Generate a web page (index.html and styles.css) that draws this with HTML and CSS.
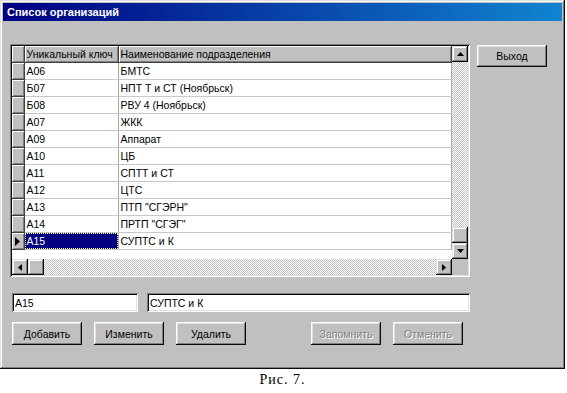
FILE: index.html
```html
<!DOCTYPE html>
<html lang="ru">
<head>
    <meta charset="UTF-8">
    <title>Список организаций</title>
    <link rel="stylesheet" href="styles.css">
</head>
<body>
    <div class="window">
        <div class="titlebar">Список организаций</div>

        <div class="client">
            <!-- Grid and exit button -->
            <div class="top">
                <div class="grid">
                    <div class="grid-main">
                        <div class="grid-view">
                            <table class="table">
                                <colgroup>
                                    <col class="col-ind">
                                    <col class="col-key">
                                    <col>
                                </colgroup>
                                <tr class="head">
                                    <th class="ind"></th>
                                    <th>Уникальный ключ</th>
                                    <th>Наименование подразделения</th>
                                </tr>
                                <tr><td class="ind"></td><td>A06</td><td>БМТС</td></tr>
                                <tr><td class="ind"></td><td>Б07</td><td>НПТ Т и СТ (Ноябрьск)</td></tr>
                                <tr><td class="ind"></td><td>Б08</td><td>РВУ 4 (Ноябрьск)</td></tr>
                                <tr><td class="ind"></td><td>A07</td><td>ЖКК</td></tr>
                                <tr><td class="ind"></td><td>A09</td><td>Аппарат</td></tr>
                                <tr><td class="ind"></td><td>A10</td><td>ЦБ</td></tr>
                                <tr><td class="ind"></td><td>A11</td><td>СПТТ и СТ</td></tr>
                                <tr><td class="ind"></td><td>A12</td><td>ЦТС</td></tr>
                                <tr><td class="ind"></td><td>A13</td><td>ПТП "СГЭРН"</td></tr>
                                <tr><td class="ind"></td><td>A14</td><td>ПРТП "СГЭГ"</td></tr>
                                <tr class="current">
                                    <td class="ind">
                                        <svg width="5" height="9" viewBox="0 0 5 9"><path d="M0 0 L5 4.5 L0 9 Z" fill="#000"/></svg>
                                    </td>
                                    <td class="selected"><span class="focus">A15</span></td>
                                    <td>СУПТС и К</td>
                                </tr>
                            </table>
                        </div>
                        <div class="vscroll">
                            <div class="sbtn">
                                <svg width="7" height="4" viewBox="0 0 7 4"><path d="M3.5 0 L7 4 L0 4 Z" fill="#000"/></svg>
                            </div>
                            <div class="track track-v">
                                <div class="thumb"></div>
                            </div>
                            <div class="sbtn">
                                <svg width="7" height="4" viewBox="0 0 7 4"><path d="M0 0 L7 0 L3.5 4 Z" fill="#000"/></svg>
                            </div>
                        </div>
                    </div>
                    <div class="hscroll-row">
                        <div class="hscroll">
                            <div class="sbtn">
                                <svg width="4" height="7" viewBox="0 0 4 7"><path d="M4 0 L4 7 L0 3.5 Z" fill="#000"/></svg>
                            </div>
                            <div class="thumb"></div>
                            <div class="track"></div>
                            <div class="sbtn">
                                <svg width="4" height="7" viewBox="0 0 4 7"><path d="M0 0 L4 3.5 L0 7 Z" fill="#000"/></svg>
                            </div>
                        </div>
                        <div class="corner"></div>
                    </div>
                </div>

                <button class="btn btn-exit">Выход</button>
            </div>

            <!-- Edit fields -->
            <div class="fields">
                <input class="field field-key" type="text" value="A15">
                <input class="field field-name" type="text" value="СУПТС и К">
            </div>

            <!-- Actions -->
            <div class="actions">
                <button class="btn">Добавить</button>
                <button class="btn">Изменить</button>
                <button class="btn">Удалить</button>
                <button class="btn btn-save" disabled>Запомнить</button>
                <button class="btn" disabled>Отменить</button>
            </div>
        </div>
    </div>

    <p class="caption">Рис. 7.</p>
</body>
</html>
```

FILE: styles.css
```css
body {
    margin: 0;
    background: #fff;
    font-family: "Liberation Sans", Arial, sans-serif;
    font-size: 10.5px;
    color: #000;
}

.window {
    box-sizing: border-box;
    width: 565px;
    height: 369px;
    padding: 3px;
    background: #c0c0c0;
    box-shadow: inset -1px -1px #0a0a0a, inset 1px 1px #dfdfdf,
                inset -2px -2px #808080, inset 2px 2px #fff;
}

.titlebar {
    height: 18px;
    padding-left: 4px;
    line-height: 18px;
    font-weight: bold;
    font-size: 11px;
    color: #fff;
    background: linear-gradient(to right, #000080, #1084d0);
}

.client {
    padding: 23px 0 0 7px;
}

.top {
    display: flex;
    align-items: flex-start;
}

/* ---- grid ---- */
.grid {
    box-sizing: border-box;
    width: 460px;
    height: 233px;
    padding: 2px;
    background: #c0c0c0;
    box-shadow: inset 1px 1px #808080, inset -1px -1px #fff,
                inset 2px 2px #0a0a0a, inset -2px -2px #dfdfdf;
}

.grid-main {
    display: flex;
    height: 213px;
}

.grid-view {
    width: 440px;
    height: 213px;
    background: #fff;
    overflow: hidden;
}

.table {
    width: 440px;
    border-collapse: collapse;
    table-layout: fixed;
}

.col-ind {
    width: 12px;
}

.col-key {
    width: 94px;
}

.table th,
.table td {
    height: 16px;
    padding: 0 0 0 2px;
    line-height: 16px;
    text-align: left;
    font-weight: normal;
    white-space: nowrap;
    overflow: hidden;
    border-right: 1px solid #a8a8a8;
    border-bottom: 1px solid #c8c8c8;
}

.table .head th {
    background: #c0c0c0;
    box-shadow: inset 1px 1px #fff, inset -1px -1px #808080;
    border-right: 1px solid #404040;
    border-bottom: 1px solid #404040;
}

.table .ind {
    padding: 0;
    background: #c0c0c0;
    box-shadow: inset 1px 1px #fff, inset -1px -1px #808080;
    border-right: 1px solid #404040;
    border-bottom: 1px solid #404040;
}

.current .ind svg {
    display: block;
    margin-left: 3px;
}

.table .selected {
    padding: 0;
    background: #000080;
    color: #fff;
}

.focus {
    display: block;
    height: 14px;
    line-height: 14px;
    padding-left: 1px;
    border: 1px dotted #ffff80;
}

/* ---- scrollbars ---- */
.sbtn {
    box-sizing: border-box;
    width: 16px;
    height: 16px;
    flex: none;
    display: flex;
    align-items: center;
    justify-content: center;
    background: #c0c0c0;
    box-shadow: inset -1px -1px #0a0a0a, inset 1px 1px #dfdfdf,
                inset -2px -2px #808080, inset 2px 2px #fff;
}

.vscroll {
    width: 16px;
    display: flex;
    flex-direction: column;
}

.track {
    flex: 1;
    display: flex;
    background: repeating-conic-gradient(#c0c0c0 0 25%, #fff 0 50%) 0 0 / 2px 2px;
}

.track-v {
    flex-direction: column;
    justify-content: flex-end;
}

.thumb {
    box-sizing: border-box;
    width: 16px;
    height: 16px;
    flex: none;
    background: #c0c0c0;
    box-shadow: inset -1px -1px #0a0a0a, inset 1px 1px #dfdfdf,
                inset -2px -2px #808080, inset 2px 2px #fff;
}

.hscroll-row {
    display: flex;
    height: 16px;
}

.hscroll {
    width: 440px;
    display: flex;
}

.corner {
    width: 16px;
    background: #c0c0c0;
}

/* ---- buttons ---- */
.btn {
    box-sizing: border-box;
    width: 70px;
    height: 23px;
    padding: 0;
    border: none;
    background: #c0c0c0;
    font-family: "Liberation Sans", Arial, sans-serif;
    font-size: 10.5px;
    color: #000;
    box-shadow: inset -1px -1px #0a0a0a, inset 1px 1px #fff,
                inset -2px -2px #808080, inset 2px 2px #dfdfdf;
}

.btn:disabled {
    color: #808080;
    text-shadow: 1px 1px #fff;
}

.btn-exit {
    height: 22px;
    margin: 1px 0 0 7px;
}

/* ---- edit fields ---- */
.fields {
    display: flex;
    gap: 9px;
    margin-top: 16px;
    padding-left: 2px;
}

.field {
    box-sizing: border-box;
    height: 19px;
    padding: 0 0 0 3px;
    border: none;
    background: #fff;
    font-family: "Liberation Sans", Arial, sans-serif;
    font-size: 10.5px;
    color: #000;
    box-shadow: inset 1px 1px #808080, inset -1px -1px #fff,
                inset 2px 2px #0a0a0a, inset -2px -2px #dfdfdf;
}

.field-key {
    width: 126px;
}

.field-name {
    width: 323px;
}

.actions {
    display: flex;
    gap: 12px;
    margin-top: 10px;
    padding-left: 2px;
}

.btn-save {
    margin-left: 53px;
}

.caption {
    width: 565px;
    margin: 3px 0 0;
    text-align: center;
    font-family: "Liberation Serif", "Times New Roman", serif;
    font-size: 14px;
    letter-spacing: 1px;
}
```
